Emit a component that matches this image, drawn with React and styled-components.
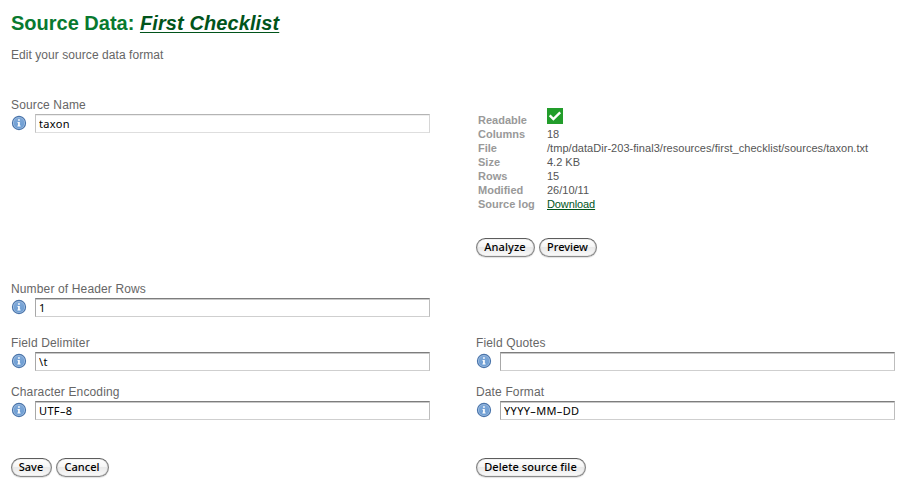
import React from 'react';
import styled, { createGlobalStyle } from 'styled-components';

const Global = createGlobalStyle`
  * { box-sizing: border-box; }
  body { margin: 0; background: #fff; color: #666; font: 12px "Liberation Sans", Arial, sans-serif; }
`;

const Page = styled.main`
  width: 910px;
  height: 489px;
  padding: 12px 15px 0 11px;
  overflow: hidden;
`;
const Title = styled.h1`
  margin: 0;
  height: 23px;
  font-size: 20px;
  line-height: 23px;
  color: #08792f;
  white-space: nowrap;
`;
const ChecklistLink = styled.a`
  font-style: italic;
  color: #01541b;
  letter-spacing: 0.1px;
  text-decoration: underline;
  text-decoration-thickness: 1px;
  text-decoration-skip-ink: none;
  text-underline-offset: 2px;
`;
const Intro = styled.p`
  margin: 12px 0 34px;
  height: 16px;
  line-height: 16px;
  letter-spacing: 0.06px;
`;
const Columns = styled.div`
  display: grid;
  grid-template-columns: 419px 419px;
  column-gap: 46px;
  align-items: start;
  height: ${(p) => p.$height}px;
`;
const FieldBox = styled.div`
  display: grid;
  grid-template-columns: 24px 395px;
  grid-template-rows: 17px 19px;
`;
const Label = styled.label`
  grid-column: 1 / -1;
  line-height: 16px;
  white-space: nowrap;
  letter-spacing: 0.14px;
`;
const Input = styled.input`
  width: 395px;
  height: 19px;
  margin: 0;
  padding: 0 3px 1px;
  border: 1px solid;
  border-color: ${(p) => (p.$soft ? '#b4b4b4 #d6d6d6 #dedede #c4c4c4' : '#7d7d7d #bdbdbd #cfcfcf #a8a8a8')};
  border-radius: 0;
  background: #fff;
  box-shadow: inset 0 1px 0 ${(p) => (p.$soft ? '#eee' : '#c8c8c8')};
  color: #000;
  font: 11px/16px "Noto Sans", sans-serif;
  letter-spacing: 0.35px;
  outline: none;
`;
const IconSvg = styled.svg`
  display: block;
  margin: 1px 0 0 0;
`;
const Details = styled.table`
  margin: 11px 0 27px 2px;
  border-collapse: collapse;
  font-size: 11px;
  line-height: 14px;
`;
const Name = styled.th`
  width: 69px;
  padding: 0;
  text-align: left;
  vertical-align: bottom;
  color: #999;
  white-space: nowrap;
`;
const Value = styled.td`
  height: 14px;
  padding: 0;
  color: #555;
  white-space: nowrap;
  letter-spacing: ${(p) => p.$track || 0}px;
`;
const Check = styled.svg`
  display: block;
  margin-bottom: 3px;
`;
const Download = styled.a`
  color: #01541b;
  letter-spacing: -0.1px;
  text-decoration: underline;
`;
const Buttons = styled.div`
  display: flex;
  gap: 4px;
  margin-left: ${(p) => p.$shift || 0}px;
`;
const Button = styled.button`
  width: ${(p) => p.$width}px;
  height: 19px;
  padding: 0 0 1px;
  border: 1px solid;
  border-color: #5c5c5c #808080 #8a8a8a;
  border-radius: 10px;
  background: linear-gradient(#fff 0%, #f5f5f5 47%, #e9e9e9 50%, #fafafa 100%);
  box-shadow: inset 0 0 1px #777, 0 1px 1px rgba(0, 0, 0, 0.12);
  color: #000;
  font: 500 11px/16px "Noto Sans", sans-serif;
  letter-spacing: ${(p) => p.$track || 0}px;
  white-space: nowrap;
`;

function InfoIcon() {
  return (
    <IconSvg width="16" height="16" viewBox="0 0 16 16" aria-label="info">
      <defs>
        <linearGradient id="infoFill" x1="0" y1="0" x2="0" y2="1">
          <stop offset="0" stopColor="#7fa8d8" />
          <stop offset="1" stopColor="#6c9dd3" />
        </linearGradient>
      </defs>
      <circle cx="8" cy="8" r="6.6" fill="#a9c5e4" stroke="#4a74aa" strokeWidth="1.1" />
      <circle cx="8" cy="8" r="5.4" fill="url(#infoFill)" />
      <path d="M7.1 4.3h1.7v1.5H7.1zM6.4 6.9h2.4v3.7h.8v1H6.4v-1h.7V7.8h-.7z" fill="#fff" />
    </IconSvg>
  );
}

function Field({ label, value, soft }) {
  return (
    <FieldBox>
      <Label>{label}</Label>
      <InfoIcon />
      <Input aria-label={label} defaultValue={value} $soft={soft} />
    </FieldBox>
  );
}

const facts = [
  ['Columns', '18'],
  ['File', '/tmp/dataDir-203-final3/resources/first_checklist/sources/taxon.txt', 0.04],
  ['Size', '4.2 KB'],
  ['Rows', '15'],
  ['Modified', '26/10/11'],
];

export default function App() {
  return (
    <>
      <Global />
      <Page>
        <Title>Source Data: <ChecklistLink>First Checklist</ChecklistLink></Title>
        <Intro>Edit your source data format</Intro>
        <Columns $height={184}>
          <Field label="Source Name" value="taxon" soft />
          <div>
            <Details>
              <tbody>
                <tr>
                  <Name>Readable</Name>
                  <Value>
                    <Check width="16" height="16" viewBox="0 0 16 16">
                      <path d="M0 0h16v16H0z" fill="#229d2b" />
                      <path d="M2.7 7.3l3.7 3.7L13.2 4.3" fill="none" stroke="#fff" strokeWidth="2.4" />
                    </Check>
                  </Value>
                </tr>
                {facts.map(([name, value, track]) => (
                  <tr key={name}><Name>{name}</Name><Value $track={track}>{value}</Value></tr>
                ))}
                <tr><Name>Source log</Name><Value><Download>Download</Download></Value></tr>
              </tbody>
            </Details>
            <Buttons $shift={-0.5}><Button $width={59} $track={0.1}>Analyze</Button><Button $width={58}>Preview</Button></Buttons>
          </div>
        </Columns>
        <Columns $height={54}>
          <Field label="Number of Header Rows" value="1" />
        </Columns>
        <Columns $height={49}>
          <Field label="Field Delimiter" value="\t" />
          <Field label="Field Quotes" value="" />
        </Columns>
        <Columns $height={74}>
          <Field label="Character Encoding" value="UTF–8" />
          <Field label="Date Format" value="YYYY–MM–DD" />
        </Columns>
        <Columns $height={20}>
          <Buttons $shift={-0.5}><Button $width={41}>Save</Button><Button $width={53}>Cancel</Button></Buttons>
          <Buttons $shift={-0.5}><Button $width={110} $track={0.08}>Delete source file</Button></Buttons>
        </Columns>
      </Page>
    </>
  );
}
